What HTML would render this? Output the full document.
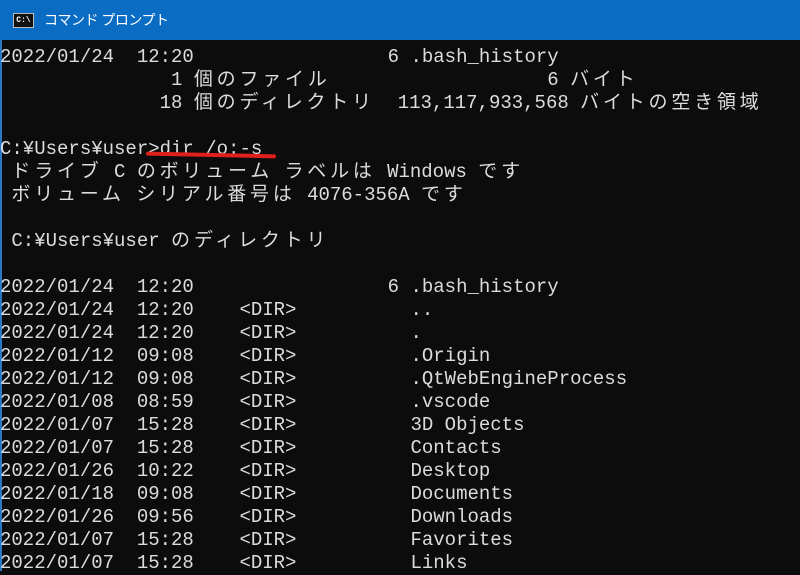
<!DOCTYPE html>
<html><head><meta charset="utf-8"><style>
body{margin:0;width:800px;height:571px;overflow:hidden;background:#0c0c0c;position:relative}
#title{position:absolute;left:0;top:0;width:800px;height:40px;background:#0b6cc4;color:#fff;font:14px "Liberation Sans","Noto Sans CJK JP",sans-serif}
#icon{position:absolute;left:13px;top:13px;width:21px;height:15px;background:#111;border:1px solid #bbb;box-sizing:border-box;color:#fff;font:bold 8px "Liberation Mono",monospace;line-height:13px;text-align:center}
#tt{position:absolute;left:44px;top:10px;letter-spacing:-0.5px}
#lb{position:absolute;left:0;top:40px;width:2px;height:531px;background:#2a78c8}
pre{position:absolute;left:0;top:46px;margin:0;color:#dcdcdc;font:19px/23px "Liberation Mono","Noto Sans CJK JP",monospace}
.j{letter-spacing:3.8px}
#ul{position:absolute;left:146px;top:153px;width:130px;height:4px;background:#e0201a;border-radius:3px;transform:rotate(1.2deg)}
</style></head><body>
<div id="title"><div id="icon">C:\</div><div id="tt">コマンド プロンプト</div></div>
<div id="lb"></div>
<pre>2022/01/24  12:20                 6 .bash_history
               1 <span class="j">個のファイル</span>                   6 <span class="j">バイト</span>
              18 <span class="j">個のディレクトリ</span>  113,117,933,568 <span class="j">バイトの空き領域</span>

C:¥Users¥user>dir /o:-s
 <span class="j">ドライブ</span> C <span class="j">のボリューム</span> <span class="j">ラベルは</span> Windows <span class="j">です</span>
 <span class="j">ボリューム</span> <span class="j">シリアル番号は</span> 4076-356A <span class="j">です</span>

 C:¥Users¥user <span class="j">のディレクトリ</span>

2022/01/24  12:20                 6 .bash_history
2022/01/24  12:20    &lt;DIR&gt;          ..
2022/01/24  12:20    &lt;DIR&gt;          .
2022/01/12  09:08    &lt;DIR&gt;          .Origin
2022/01/12  09:08    &lt;DIR&gt;          .QtWebEngineProcess
2022/01/08  08:59    &lt;DIR&gt;          .vscode
2022/01/07  15:28    &lt;DIR&gt;          3D Objects
2022/01/07  15:28    &lt;DIR&gt;          Contacts
2022/01/26  10:22    &lt;DIR&gt;          Desktop
2022/01/18  09:08    &lt;DIR&gt;          Documents
2022/01/26  09:56    &lt;DIR&gt;          Downloads
2022/01/07  15:28    &lt;DIR&gt;          Favorites
2022/01/07  15:28    &lt;DIR&gt;          Links</pre>
<div id="ul"></div>
</body></html>
